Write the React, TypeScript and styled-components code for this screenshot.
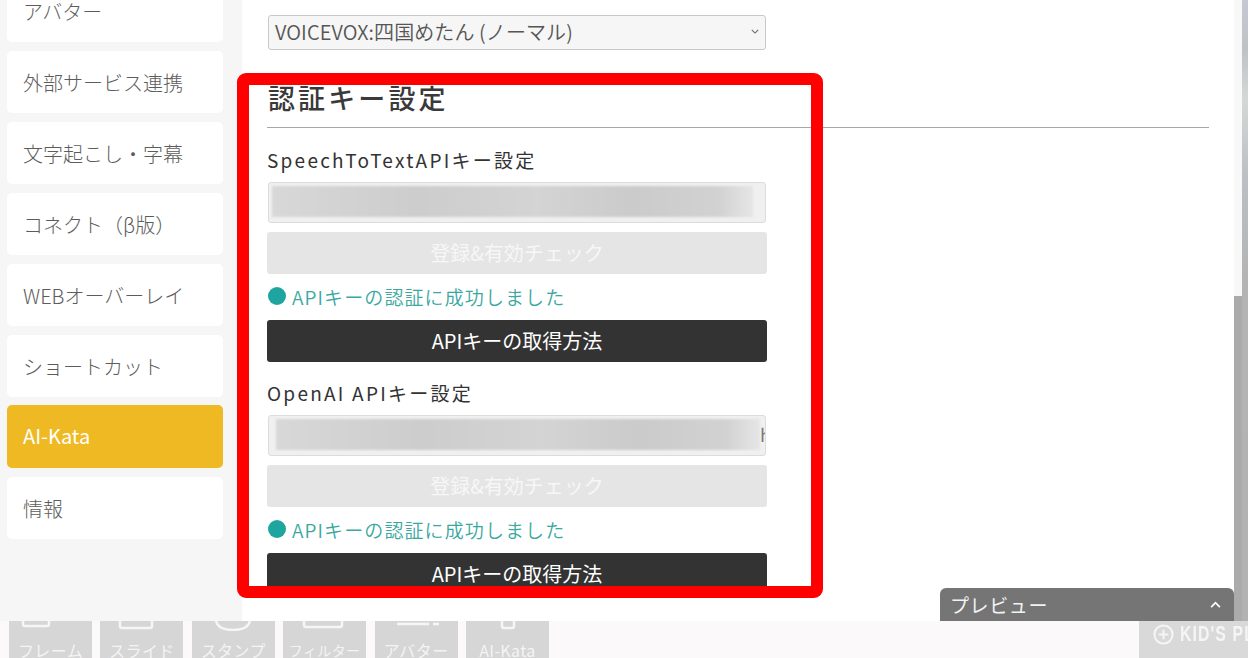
import React from "react";
import styled, { createGlobalStyle } from "styled-components";

const Global = createGlobalStyle`
  html, body { margin: 0; padding: 0; background: #fff; }
  body { font-family: "Noto Sans CJK JP", "Noto Sans", sans-serif; }
  * { box-sizing: border-box; }
`;

const Page = styled.div`
  position: relative;
  width: 1248px;
  height: 658px;
  overflow: hidden;
  display: flex;
  flex-direction: column;
  background: #fbf9f9;
`;

const Upper = styled.div`
  position: relative;
  display: flex;
  height: 621px;
  flex: none;
`;

const Sidebar = styled.nav`
  width: 242px;
  flex: none;
  background: #f6f6f6;
  padding: 0 19px 0 7px;
  overflow: hidden;
`;

const MenuList = styled.div`
  display: flex;
  flex-direction: column;
  gap: 9px;
  margin-top: -20px;
`;

const MenuItem = styled.div<{ $active?: boolean }>`
  height: ${(p) => (p.$active ? "63px" : "62px")};
  margin-top: ${(p) => (p.$active ? "-1px" : "0")};
  border-radius: 5px;
  display: flex;
  align-items: center;
  padding-left: 16px;
  padding-bottom: ${(p) => (p.$active ? "3px" : "0")};
  font-size: 20px;
  font-weight: ${(p) => (p.$active ? 400 : 300)};
  color: ${(p) => (p.$active ? "#fff" : "#5c5c5c")};
  background: ${(p) => (p.$active ? "#eeb922" : "#fff")};
`;

const Main = styled.main`
  flex: 1;
  min-width: 0;
  background: #fff;
  overflow: hidden;
  padding: 15px 25px 0 26px;
`;

const Column = styled.div`
  width: 500px;
`;

const Select = styled.div`
  width: 498px;
  height: 35px;
  background: #f6f6f6;
  border: 1px solid #c9c9c9;
  border-radius: 3px;
  padding: 0 6px 3px 6px;
  display: flex;
  align-items: center;
  justify-content: space-between;
  font-size: 20px;
  letter-spacing: 0.1px;
  font-weight: 350;
  color: #555;
`;

const Heading = styled.h2`
  margin: 31px 0 0 -1px;
  height: 47px;
  padding-left: 1px;
  font-size: 27px;
  line-height: 34px;
  font-weight: 500;
  letter-spacing: 3.1px;
  color: #3a3a3a;
  border-bottom: 1px solid #a8a8a8;
`;

const SubHeading = styled.h3<{ $first?: boolean }>`
  margin: ${(p) => (p.$first ? "18px" : "17px")} 0 1px -1px;
  font-size: 19px;
  line-height: 27px;
  font-weight: 400;
  letter-spacing: 2.25px;
  color: #333;
  white-space: nowrap;
`;

const KeyField = styled.div`
  position: relative;
  width: 498px;
  height: 41px;
  margin-top: 9px;
  background: #f0f0f0;
  border: 1px solid #dcdcdc;
  border-radius: 3px;
  overflow: hidden;
`;

const KeyBlur = styled.div<{ $inset: number }>`
  position: absolute;
  top: 3px;
  bottom: 5px;
  left: ${(p) => p.$inset}px;
  right: ${(p) => (p.$inset > 4 ? 5 : 12)}px;
  background: linear-gradient(90deg, #d8d8d8, #cdcdcd 30%, #d4d4d4 55%, #cbcbcb 75%, #d2d2d2 93%, #e6e6e6);
  filter: blur(1px);
`;

const Clipped = styled.span`
  position: absolute;
  right: -6px;
  top: 5px;
  font-size: 18px;
  line-height: 26px;
  color: #777;
`;

const ActionButton = styled.div<{ $dark?: boolean }>`
  width: 500px;
  height: 42px;
  margin-left: -1px;
  margin-top: ${(p) => (p.$dark ? "12px" : "9px")};
  border-radius: 3px;
  display: flex;
  align-items: center;
  justify-content: center;
  padding-bottom: 1px;
  font-size: 20px;
  font-weight: 400;
  color: ${(p) => (p.$dark ? "#fff" : "#f7f7f7")};
  background: ${(p) => (p.$dark ? "#333" : "#e5e5e5")};
`;

const Status = styled.div`
  display: flex;
  align-items: center;
  gap: 6px;
  height: 34px;
  margin-top: 5px;
  margin-bottom: -5px;
  font-size: 19px;
  letter-spacing: 1.1px;
  font-weight: 350;
  color: #3aa89f;
`;

const Dot = styled.span`
  width: 18px;
  height: 18px;
  border-radius: 50%;
  background: #1fa5a0;
  flex: none;
`;

const Scrollbar = styled.div`
  width: 8px;
  flex: none;
  background: #f8f8f8;
  display: flex;
  flex-direction: column;
  justify-content: flex-end;
`;

const ScrollThumb = styled.div`
  height: 325px;
  background: #ababab;
`;

const SideStrip = styled.div`
  width: 6px;
  flex: none;
  background: linear-gradient(180deg, #c6c8d2 0, #bfc2c4 8%, #d5d8d6 16%, #bcc0c4 28%, #b4b4b4 45%, #b2b2b2 100%);
`;

const PreviewBar = styled.div`
  position: absolute;
  left: 940px;
  bottom: 0;
  width: 294px;
  height: 33px;
  background: #757575;
  border-radius: 6px 6px 0 0;
  display: flex;
  align-items: center;
  justify-content: space-between;
  padding: 0 13px 0 10px;
  color: #f2f2f2;
  font-size: 19px;
  letter-spacing: 0.6px;
`;

const Annotation = styled.div`
  position: absolute;
  left: 237px;
  top: 73px;
  width: 586px;
  height: 525px;
  border: 12px solid #ff0000;
  border-radius: 9px;
  pointer-events: none;
`;

const Toolbar = styled.footer`
  flex: 1;
  display: flex;
  align-items: stretch;
  justify-content: space-between;
  background: #fbf9f9;
`;

const ToolGroup = styled.div`
  display: flex;
  gap: 8.4px;
  padding-left: 9px;
`;

const ToolButton = styled.div<{ $tight?: boolean }>`
  width: 83px;
  background: #d6d6d6;
  overflow: hidden;
  display: flex;
  flex-direction: column;
  align-items: center;
  justify-content: space-between;
  color: #f4f4f4;
  font-size: ${(p) => (p.$tight ? "14px" : "16px")};
  line-height: 20px;
  padding-bottom: 3px;
  letter-spacing: 0.4px;
  white-space: nowrap;
`;

const ToolIcon = styled.svg`
  display: block;
  flex: none;
`;

const Sponsor = styled.div`
  width: 109px;
  background: #d9d9d9;
  display: flex;
  align-items: center;
  gap: 6px;
  padding: 0 0 16px 14px;
  overflow: hidden;
  white-space: nowrap;
  color: #f5f5f5;
  font-family: "Liberation Sans", sans-serif;
  font-weight: 700;
  font-size: 22px;
  letter-spacing: 1.5px;
`;

const SponsorName = styled.span`
  display: inline-block;
  transform: scaleX(0.72);
  transform-origin: left center;
`;

const menu = ["アバター", "外部サービス連携", "文字起こし・字幕", "コネクト（β版）", "WEBオーバーレイ", "ショートカット", "AI-Kata", "情報"];

const tools = [
  { label: "フレーム", d: "M14 0v3q0 2 2 2h22q2 0 2-2V0" },
  { label: "スライド", d: "M20 0v5q0 2 2 2h28q2 0 2-2V0" },
  { label: "スタンプ", d: "M24 0q2 9 17 9t17-9" },
  { label: "フィルター", d: "M21 0v4q0 2 2 2h34q2 0 2-2V0", tight: true },
  { label: "アバター", d: "M22 3h32M58 3h6" },
  { label: "AI-Kata", d: "M36 0v5q0 2 2 2h8q2 0 2-2V0" },
];

function KeySection(props: { title: string; first?: boolean; inset: number; clipped?: boolean }) {
  return (
    <>
      <SubHeading $first={props.first}>{props.title}</SubHeading>
      <KeyField>
        <KeyBlur $inset={props.inset} />
        {props.clipped && <Clipped>h</Clipped>}
      </KeyField>
      <ActionButton>登録&amp;有効チェック</ActionButton>
      <Status>
        <Dot />
        APIキーの認証に成功しました
      </Status>
      <ActionButton $dark>APIキーの取得方法</ActionButton>
    </>
  );
}

export default function App() {
  return (
    <Page>
      <Global />
      <Upper>
        <Sidebar>
          <MenuList>
            {menu.map((m) => (
              <MenuItem key={m} $active={m === "AI-Kata"}>
                {m}
              </MenuItem>
            ))}
          </MenuList>
        </Sidebar>
        <Main>
          <Column>
            <Select>
              VOICEVOX:四国めたん (ノーマル)
              <svg width="8" height="5" viewBox="0 0 10 6" fill="none" stroke="#666" strokeWidth="1.3">
                <path d="M1 1l4 4 4-4" />
              </svg>
            </Select>
          </Column>
          <Heading>認証キー設定</Heading>
          <Column>
            <KeySection first title="SpeechToTextAPIキー設定" inset={3} />
            <KeySection title="OpenAI APIキー設定" inset={7} clipped />
          </Column>
        </Main>
        <Scrollbar>
          <ScrollThumb />
        </Scrollbar>
        <SideStrip />
        <PreviewBar>
          プレビュー
          <svg width="11" height="7" viewBox="0 0 12 8" fill="none" stroke="#fff" strokeWidth="2">
            <path d="M1 7l5-5 5 5" />
          </svg>
        </PreviewBar>
      </Upper>
      <Toolbar>
        <ToolGroup>
          {tools.map((t) => (
            <ToolButton key={t.label} $tight={t.tight}>
              <ToolIcon width="83" height="10" viewBox="0 0 83 10" fill="none" stroke="#f6f6f6" strokeWidth="2.5">
                <path d={t.d} />
              </ToolIcon>
              {t.label}
            </ToolButton>
          ))}
        </ToolGroup>
        <Sponsor>
          <svg width="21" height="21" viewBox="0 0 22 22" fill="none" stroke="#f5f5f5" strokeWidth="2.2" style={{ flex: "none" }}>
            <circle cx="11" cy="11" r="9.5" />
            <path d="M11 6v10M6 11h10" />
          </svg>
          <SponsorName>KID'S PLUS</SponsorName>
        </Sponsor>
      </Toolbar>
      <Annotation />
    </Page>
  );
}
